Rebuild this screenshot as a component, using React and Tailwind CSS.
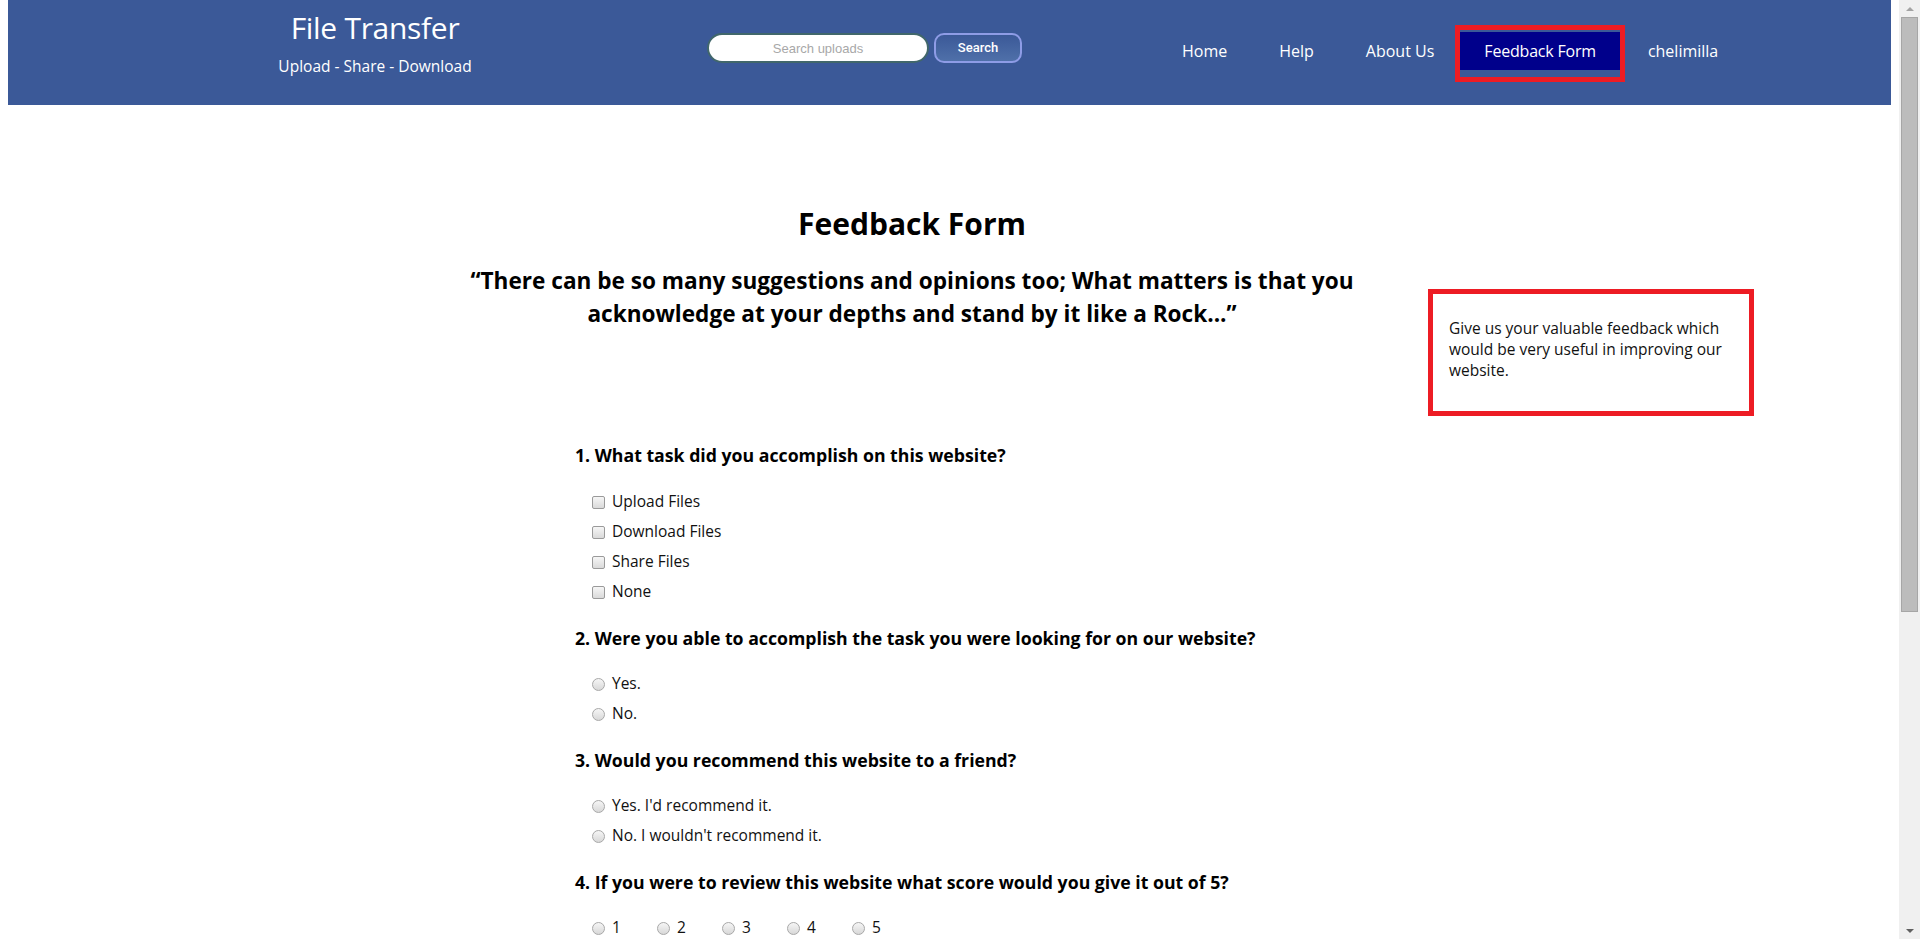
import { useState } from 'react';

const navLinks = ['Home', 'Help', 'About Us'];

const Check = ({ label }) => (
    <label className="flex items-center h-[30px] pl-[17px] text-[15.5px] text-[#111]">
        <input
            type="checkbox"
            className="appearance-none w-[13px] h-[13px] rounded-[2px] border border-[#9a9a9a] bg-linear-to-b from-[#f6f6f6] to-[#dadada] mr-[7px]"
        />
        {label}
    </label>
);

const Radio = ({ name, label, className = '' }) => (
    <label className={`flex items-center h-[30px] text-[15.5px] text-[#111] ${className}`}>
        <input
            type="radio"
            name={name}
            className="appearance-none w-[13px] h-[13px] rounded-full border border-[#a8a8a8] bg-linear-to-b from-[#f6f6f6] to-[#d8d8d8] mr-[7px]"
        />
        {label}
    </label>
);

const Question = ({ children, first }) => (
    <h3 className={`text-[17.7px] font-bold leading-[24px] text-black ${first ? '' : 'mt-[19px]'}`}>{children}</h3>
);

// window scrollbar as it shows in the screenshot
const ScrollBar = () => (
    <div className="w-[21px] h-screen shrink-0 flex flex-col bg-[#f0f0f0]">
        <div className="h-[17px] flex items-center justify-center">
            <div className="w-0 h-0 border-x-[4px] border-x-transparent border-b-[4px] border-b-[#a3a3a3]" />
        </div>
        <div className="h-[595px] mx-[2px] bg-[#bcbcbc] border border-[#a6a6a6]" />
        <div className="flex-1" />
        <div className="h-[17px] flex items-center justify-center">
            <div className="w-0 h-0 border-x-[4px] border-x-transparent border-t-[4px] border-t-[#606060]" />
        </div>
    </div>
);

const App = () => {
    const [search, setSearch] = useState('');

    return (
        <div className="flex h-screen bg-white font-['Open_Sans','Noto_Sans',sans-serif]">
            <div className="flex-1 overflow-y-auto px-[8px]">
                {/* header */}
                <div className="flex items-start h-[105px] bg-[#3b5998] pl-[217px] text-white">
                    <div className="w-[300px] text-center mt-[8px]">
                        <div className="text-[30px] leading-[40px] tracking-[-0.3px]">File Transfer</div>
                        <div className="text-[15.5px] leading-[22px] mt-[7px]">Upload - Share - Download</div>
                    </div>

                    <div className="flex gap-[5px] ml-[182px] mt-[33px]">
                        <input
                            value={search}
                            onChange={(e) => setSearch(e.target.value)}
                            placeholder="Search uploads"
                            className="w-[222px] h-[30px] rounded-full bg-white border-2 border-[#41676b] text-center text-[13px] text-[#333] placeholder:text-[#a8a8a8] font-['Liberation_Sans',Arial,sans-serif] outline-none"
                        />
                        <button className="w-[88px] h-[30px] rounded-[10px] border-2 border-[#8e9ce6] bg-linear-to-b from-[#3b5998] to-[#4f70a9] text-white text-[13px] font-medium font-['Roboto',sans-serif]">
                            Search
                        </button>
                    </div>

                    <nav className="flex items-start ml-[134px] mt-[30px] text-[16px]">
                        {navLinks.map((link) => (
                            <a key={link} className="px-[26px] pt-[2px] leading-[38px] cursor-pointer">
                                {link}
                            </a>
                        ))}
                        <div className="pt-[2px] pb-[7px] outline-[5px] outline-solid outline-[#ed1c24]">
                            <a className="block px-[24px] leading-[38px] bg-[#00008b] tracking-[-0.2px] cursor-pointer">Feedback Form</a>
                        </div>
                        <a className="pl-[28px] pr-[24px] pt-[2px] leading-[38px] cursor-pointer">chelimilla</a>
                    </nav>
                </div>

                {/* content */}
                <div className="flex items-start">
                    <div className="w-[1024px] ml-[392px] pb-[230px]">
                        <h1 className="mt-[99px] text-center text-[30px] font-bold leading-[40px] text-black">Feedback Form</h1>
                        <p className="mt-[20px] text-center text-[22.6px] font-bold leading-[33px] text-black">
                            “There can be so many suggestions and opinions too; What matters is that you
                            <br />
                            acknowledge at your depths and stand by it like a Rock...”
                        </p>

                        <form className="mt-[113px] pl-[175px]">
                            <Question first>1. What task did you accomplish on this website?</Question>
                            <div className="mt-[20px]">
                                <Check label="Upload Files" />
                                <Check label="Download Files" />
                                <Check label="Share Files" />
                                <Check label="None" />
                            </div>

                            <Question>2. Were you able to accomplish the task you were looking for on our website?</Question>
                            <div className="mt-[19px] pl-[17px]">
                                <Radio name="q2" label="Yes." />
                                <Radio name="q2" label="No." />
                            </div>

                            <Question>3. Would you recommend this website to a friend?</Question>
                            <div className="mt-[19px] pl-[17px]">
                                <Radio name="q3" label="Yes. I'd recommend it." />
                                <Radio name="q3" label="No. I wouldn't recommend it." />
                            </div>

                            <Question>4. If you were to review this website what score would you give it out of 5?</Question>
                            <div className="mt-[19px] pl-[17px] flex">
                                {[1, 2, 3, 4, 5].map((n) => (
                                    <Radio key={n} name="q4" label={n} className="w-[65px]" />
                                ))}
                            </div>

                            <Question>5. Any other comments or suggestions?</Question>
                            <div className="mt-[19px] pl-[17px]">
                                <textarea className="w-[500px] h-[120px] border border-[#a9a9a9] p-2 text-[15px] resize-none" />
                            </div>
                            <div className="mt-[30px] pl-[17px]">
                                <button type="button" className="px-6 h-[36px] bg-[#3b5998] text-white text-[16px] rounded">
                                    Submit
                                </button>
                            </div>
                        </form>
                    </div>

                    <div className="w-[326px] ml-[4px] mt-[184px] border-[5px] border-[#ed1c24] pt-[24px] pb-[30px] pl-[16px] pr-[10px] text-[15.5px] leading-[21px] text-[#111]">
                        Give us your valuable feedback which would be very useful in improving our website.
                    </div>
                </div>
            </div>
            <ScrollBar />
        </div>
    );
};

export default App;
